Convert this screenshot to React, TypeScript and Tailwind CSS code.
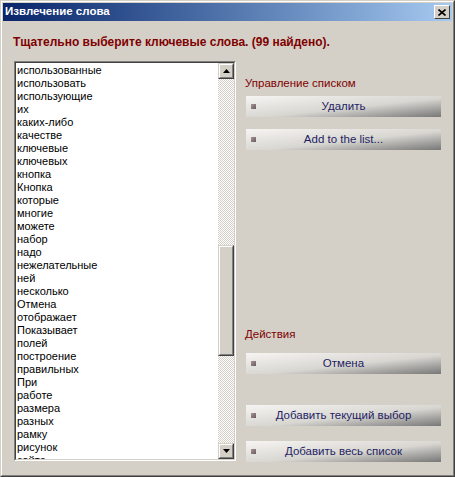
import React from "react";

const words = [
  "использованные",
  "использовать",
  "использующие",
  "их",
  "каких-либо",
  "качестве",
  "ключевые",
  "ключевых",
  "кнопка",
  "Кнопка",
  "которые",
  "многие",
  "можете",
  "набор",
  "надо",
  "нежелательные",
  "ней",
  "несколько",
  "Отмена",
  "отображает",
  "Показывает",
  "полей",
  "построение",
  "правильных",
  "При",
  "работе",
  "размера",
  "разных",
  "рамку",
  "рисунок",
  "сайте",
];

function Arrow({ up }: { up?: boolean }) {
  return (
    <div className="w-[16px] h-[16px] bg-[#d4d0c8] border-t border-l border-t-[#d4d0c8] border-l-[#d4d0c8] border-r border-b border-r-[#404040] border-b-[#404040]">
      <div className="w-full h-full border-t border-l border-t-white border-l-white border-r border-b border-r-[#808080] border-b-[#808080] flex items-center justify-center">
        <svg width="7" height="4" viewBox="0 0 7 4">
          {up ? (
            <path d="M3.5 0 L7 4 L0 4 Z" fill="#000" />
          ) : (
            <path d="M0 0 L7 0 L3.5 4 Z" fill="#000" />
          )}
        </svg>
      </div>
    </div>
  );
}

function GlassButton({ label }: { label: string }) {
  return (
    <button className="relative w-[195px] h-[21px] bg-linear-to-br from-[#f6f5f3] via-[#d8d6d1] via-55% to-[#787878] flex items-center justify-center text-[#1e1e64] text-[11.5px]">
      <span className="absolute left-[5px] top-[8px] w-[5px] h-[5px] bg-linear-to-br from-[#a8949a] to-[#6a5a5e]" />
      <span>{label}</span>
    </button>
  );
}

export default function App() {
  return (
    <div
      className="w-[455px] h-[477px] bg-[#d4d0c8] border border-t-[#d4d0c8] border-l-[#d4d0c8] border-r-[#404040] border-b-[#404040] select-none"
      style={{ fontFamily: '"Liberation Sans", Arial, sans-serif' }}
    >
      <div className="w-full h-full border border-t-white border-l-white border-r-[#808080] border-b-[#808080] p-px flex flex-col">
        {/* caption */}
        <div className="h-[18px] bg-linear-to-r from-[#0a246a] to-[#a6caf0] flex items-center justify-between pl-[2px] pr-[2px]">
          <span className="text-white font-bold text-[11.5px] leading-none">Извлечение слова</span>
          <div className="w-[16px] h-[14px] bg-[#d4d0c8] border border-t-white border-l-white border-r-[#404040] border-b-[#404040] flex items-center justify-center">
            <svg width="8" height="7" viewBox="0 0 8 7">
              <path d="M0.5 0.5 L7.5 6.5 M7.5 0.5 L0.5 6.5" stroke="#000" strokeWidth="1.6" />
            </svg>
          </div>
        </div>

        {/* body */}
        <div className="flex-1 flex flex-col">
          <div className="pl-[10px] pt-[15px] h-[40px] text-[#800000] font-bold text-[12px] leading-none">
            Тщательно выберите ключевые слова. (99 найдено).
          </div>

          <div className="flex pl-[11px]">
            {/* list box */}
            <div className="w-[222px] h-[400px] border border-t-[#808080] border-l-[#808080] border-r-white border-b-white">
              <div className="w-full h-full border border-t-[#404040] border-l-[#404040] border-r-[#d4d0c8] border-b-[#d4d0c8] bg-white flex overflow-hidden">
                <div className="flex-1 overflow-hidden pl-[1px] pt-[1px]">
                  {words.map((w) => (
                    <div key={w} className="h-[13px] leading-[13px] text-[11px] text-black whitespace-nowrap">
                      {w}
                    </div>
                  ))}
                </div>
                {/* vertical scrollbar */}
                <div className="w-[16px] h-full flex flex-col">
                  <Arrow up />
                  <div className="flex-1 flex flex-col bg-[repeating-conic-gradient(#d4d0c8_0_25%,#ffffff_0_50%)] bg-size-[2px_2px]">
                    <div className="h-[166px]" />
                    <div className="w-[16px] h-[111px] bg-[#d4d0c8] border border-t-[#d4d0c8] border-l-[#d4d0c8] border-r-[#404040] border-b-[#404040]">
                      <div className="w-full h-full border border-t-white border-l-white border-r-[#808080] border-b-[#808080]" />
                    </div>
                  </div>
                  <Arrow />
                </div>
              </div>
            </div>

            {/* right column */}
            <div className="flex flex-col pl-[9px]">
              <div className="h-[14px] mt-[15px] text-[#800000] text-[11.5px] leading-[14px]">Управление списком</div>
              <div className="pl-px mt-[6px] flex flex-col gap-[12px]">
                <GlassButton label="Удалить" />
                <GlassButton label="Add to the list..." />
              </div>

              <div className="h-[14px] mt-[177px] text-[#800000] text-[11.5px] leading-[14px]">Действия</div>
              <div className="pl-px mt-[12px] flex flex-col">
                <GlassButton label="Отмена" />
                <div className="h-[31px]" />
                <GlassButton label="Добавить текущий выбор" />
                <div className="h-[15px]" />
                <GlassButton label="Добавить весь список" />
              </div>
            </div>
          </div>
        </div>
      </div>
    </div>
  );
}
